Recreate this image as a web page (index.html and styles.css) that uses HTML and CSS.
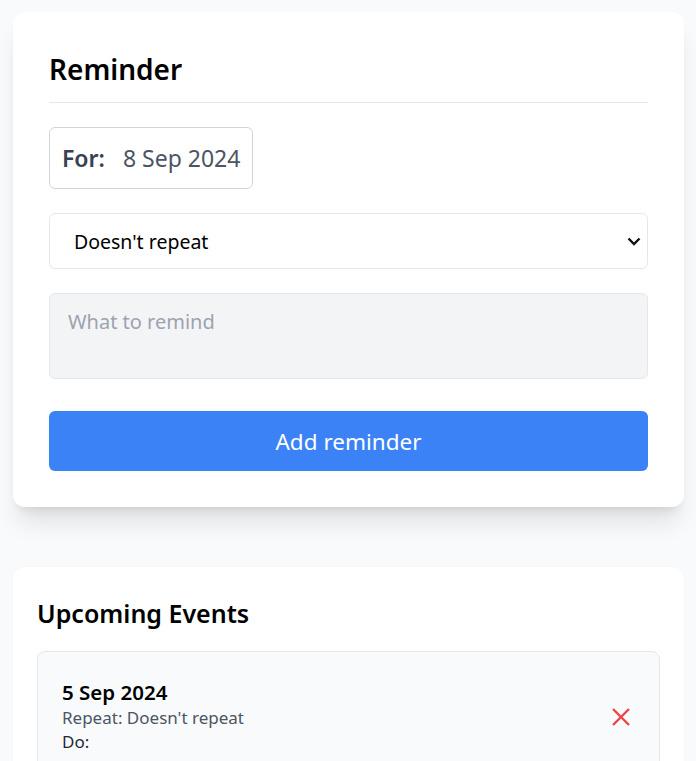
FILE: index.html
```html
<!DOCTYPE html>
<html lang="en">
<head>
<meta charset="utf-8">
<title>Reminder</title>
<link rel="stylesheet" href="styles.css">
</head>
<body>
<main class="page">
  <section class="card form-card">
    <h1 class="card-title">Reminder</h1>
    <div class="for-box">
      <span class="for-label">For:</span>
      <span class="for-date">8 Sep 2024</span>
    </div>
    <div class="select-wrap">
      <select class="repeat-select">
        <option>Doesn't repeat</option>
        <option>Daily</option>
        <option>Weekly</option>
        <option>Monthly</option>
      </select>
      <svg class="chevron" width="14" height="9" viewBox="0 0 14 9" aria-hidden="true"><path d="M1.5 1.5 L7 7 L12.5 1.5" fill="none" stroke="#111" stroke-width="2.4"/></svg>
    </div>
    <textarea class="remind-input" placeholder="What to remind"></textarea>
    <button class="add-btn" type="button">Add reminder</button>
  </section>

  <section class="card events-card">
    <h2 class="events-title">Upcoming Events</h2>
    <div class="event">
      <div class="event-info">
        <div class="event-date">5 Sep 2024</div>
        <div class="event-repeat">Repeat: Doesn't repeat</div>
        <div class="event-do">Do:</div>
      </div>
      <button class="delete-btn" type="button" aria-label="Delete">
        <svg width="20" height="20" viewBox="0 0 20 20" aria-hidden="true"><path d="M2 2 L18 18 M18 2 L2 18" stroke="#ef4444" stroke-width="2.4" fill="none"/></svg>
      </button>
    </div>
  </section>
</main>
</body>
</html>
```

FILE: styles.css
```css
* { box-sizing: border-box; }
html, body { margin: 0; }
body {
  background: #f9fafb;
  font-family: "Noto Sans", "Open Sans", sans-serif;
  color: #111827;
}
.page {
  padding: 12px 12px 40px 13px;
  display: flex;
  flex-direction: column;
  gap: 60px;
}
.card {
  background: #fff;
  border-radius: 12px;
}
.form-card {
  padding: 36px;
  box-shadow: 0 20px 25px -5px rgba(0,0,0,0.1), 0 8px 10px -6px rgba(0,0,0,0.1);
  display: flex;
  flex-direction: column;
  align-items: flex-start;
}
.card-title {
  margin: 3px 0 0;
  width: 100%;
  font-size: 28px;
  line-height: 36px;
  font-weight: 600;
  color: #000;
  padding-bottom: 15px;
  border-bottom: 1px solid #e5e7eb;
}
.for-box {
  margin-top: 24px;
  height: 62px;
  padding: 0 12px;
  border: 1px solid #d1d5db;
  border-radius: 6px;
  display: flex;
  align-items: center;
  gap: 18px;
  font-size: 23px;
}
.for-label { font-weight: 600; color: #374151; }
.for-date { color: #4b5563; }
.select-wrap {
  margin-top: 24px;
  width: 100%;
  position: relative;
}
.repeat-select {
  appearance: none;
  -webkit-appearance: none;
  width: 100%;
  height: 56px;
  padding: 0 24px;
  border: 1px solid #e5e7eb;
  border-radius: 6px;
  background: #fff;
  font-family: inherit;
  font-size: 19.5px;
  color: #000;
  display: block;
}
.chevron {
  position: absolute;
  right: 7px;
  top: 24px;
}
.remind-input {
  margin-top: 24px;
  width: 100%;
  height: 86px;
  padding: 14px 18px;
  border: 1px solid #e5e7eb;
  border-radius: 6px;
  background: #f3f4f6;
  font-family: inherit;
  font-size: 20px;
  line-height: 28px;
  resize: none;
  display: block;
}
.remind-input::placeholder { color: #9ca3af; }
.add-btn {
  margin-top: 32px;
  width: 100%;
  height: 60px;
  border: 0;
  border-radius: 6px;
  background: #3b82f6;
  color: #fff;
  font-family: inherit;
  font-size: 22.5px;
}
.events-card {
  padding: 24px;
  box-shadow: 0 1px 3px rgba(0,0,0,0.03);
}
.events-title {
  margin: 6px 0 22px;
  font-size: 25px;
  line-height: 32px;
  font-weight: 600;
  color: #000;
}
.event {
  background: #f9fafb;
  border: 1px solid #e5e7eb;
  border-radius: 8px;
  padding: 27px 28px 24px 24px;
  display: flex;
  align-items: center;
  justify-content: space-between;
}
.event-date {
  font-size: 20.5px;
  font-weight: 600;
  line-height: 27px;
  color: #000;
}
.event-repeat {
  font-size: 17px;
  line-height: 24px;
  color: #4b5563;
}
.event-do {
  font-size: 17px;
  line-height: 24px;
  color: #1f2937;
}
.delete-btn {
  background: none;
  border: 0;
  padding: 0;
  display: flex;
}
```
